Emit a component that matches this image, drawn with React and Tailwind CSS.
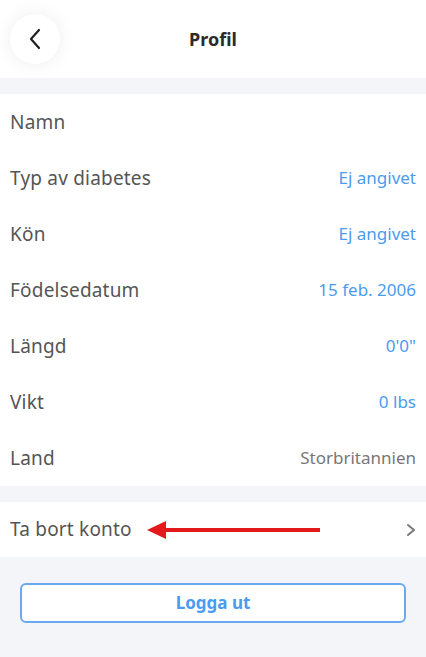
import React from 'react';

const rows = [
  { label: 'Namn', value: '' },
  { label: 'Typ av diabetes', value: 'Ej angivet', blue: true },
  { label: 'Kön', value: 'Ej angivet', blue: true },
  { label: 'Födelsedatum', value: '15 feb. 2006', blue: true },
  { label: 'Längd', value: '0\'0"', blue: true },
  { label: 'Vikt', value: '0 lbs', blue: true },
  { label: 'Land', value: 'Storbritannien' },
];

const App = () => {
  return (
    <div
      className="w-[426px] h-[657px] bg-[#f4f5f9] flex flex-col overflow-hidden"
      style={{ fontFamily: '"Noto Sans", "Open Sans", sans-serif' }}
    >
      {/* header */}
      <div className="h-[78px] bg-white flex items-center relative shrink-0">
        <div className="ml-[10px] w-[50px] h-[50px] rounded-full bg-white shadow-[0_0_18px_rgba(0,0,0,0.07)] flex items-center justify-center">
          <svg width="14" height="22" viewBox="0 0 14 22" fill="none">
            <path d="M11 2 L3 11 L11 20" stroke="#1f1f1f" strokeWidth="2.2" strokeLinecap="round" strokeLinejoin="round" />
          </svg>
        </div>
        <h1 className="absolute left-0 right-0 text-center text-[18px] font-bold text-[#2b2b2b] pointer-events-none">
          Profil
        </h1>
      </div>

      <div className="h-[16px] shrink-0" />

      {/* profile list */}
      <div className="bg-white flex flex-col shrink-0">
        {rows.map((r) => (
          <div key={r.label} className="h-[56px] px-[10px] flex items-center justify-between">
            <span className="text-[19px] text-[#555555] tracking-[0.2px]">{r.label}</span>
            {r.value && (
              <span className={r.blue ? 'text-[17px] text-[#4b9bf0]' : 'text-[17px] text-[#777777]'}>
                {r.value}
              </span>
            )}
          </div>
        ))}
      </div>

      <div className="h-[16px] shrink-0" />

      {/* delete account */}
      <div className="bg-white h-[55px] pl-[10px] pr-[10px] flex items-center justify-between relative shrink-0">
        <span className="text-[19px] text-[#555555] tracking-[0.2px]">Ta bort konto</span>
        <svg className="absolute left-[147px] top-[18px]" width="174" height="20" viewBox="0 0 174 20">
          <path d="M14 10 L173 10" stroke="#e3191c" strokeWidth="4" />
          <path d="M0 10 L19 1 L19 19 Z" fill="#e3191c" />
        </svg>
        <svg width="10" height="14" viewBox="0 0 10 14" fill="none">
          <path d="M2 2 L8 7 L2 12" stroke="#7a7a7a" strokeWidth="2" strokeLinecap="round" strokeLinejoin="round" />
        </svg>
      </div>

      {/* logout */}
      <div className="px-[20px] pt-[26px]">
        <button className="w-full h-[40px] rounded-[6px] border-2 border-[#6aa8f2] bg-white text-[17px] font-bold text-[#4b9bf0]">
          Logga ut
        </button>
      </div>
    </div>
  );
};

export default App;
